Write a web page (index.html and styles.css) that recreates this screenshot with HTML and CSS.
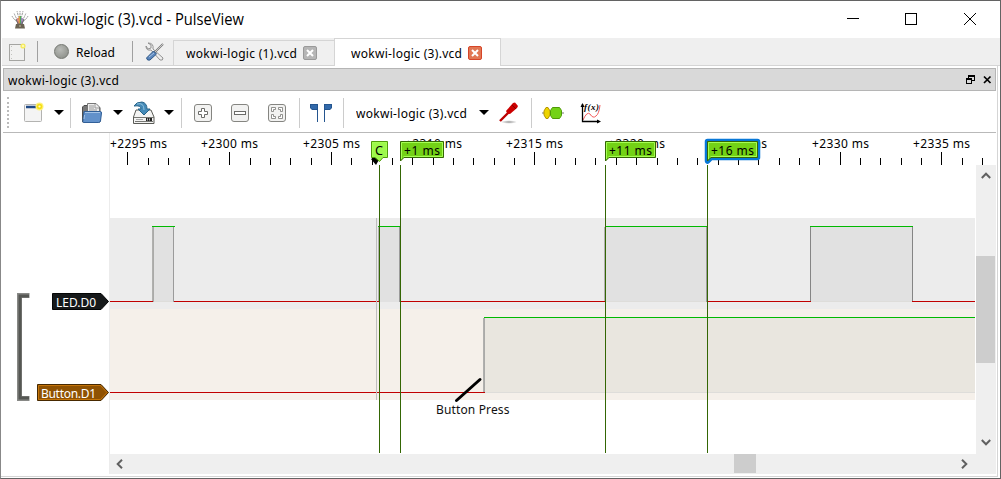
FILE: index.html
```html
<!DOCTYPE html>
<html lang="en">
<head>
<meta charset="utf-8">
<title>wokwi-logic (3).vcd - PulseView</title>
<link rel="stylesheet" href="styles.css">
</head>
<body>
<div class="window">
  <header class="titlebar">
    <svg class="app-icon" width="20" height="20" viewBox="0 0 20 20">
      <g fill="none" stroke="#999" stroke-width="1"><path d="M9 13Q4 10 2 6M9 13Q5 6 4 3M10 13Q8 5 7 1M10 13V1M10 13Q12 5 13 1M11 13Q15 6 16 3M11 13Q16 10 18 6" stroke-dasharray="2 .7"/></g>
      <path d="M8 14V8" stroke="#e45b54" stroke-width="1.3"/><path d="M9.4 14V6" stroke="#d6a23f" stroke-width="1.3"/><path d="M10.6 14V6" stroke="#50a760" stroke-width="1.3"/><path d="M12 14V8" stroke="#8a63b4" stroke-width="1.3"/>
      <path d="M6 9L8 14H12L14 9" fill="none" stroke="#666"/><path d="M6 14H14L15 18.500H5Z" fill="#6b6353"/><path d="M9 16H11" stroke="#c8c0ac"/>
    </svg>
    <h1 class="title"><svg width="210" height="24"><text x="0" y="17" textLength="209" lengthAdjust="spacingAndGlyphs">wokwi-logic (3).vcd - PulseView</text></svg></h1>
    <svg class="window-buttons" width="130" height="14" viewBox="0 0 130 14" shape-rendering="crispEdges" fill="none" stroke="#000">
      <path d="M0 6.500H12"/><rect x="58.500" y="1.500" width="11" height="11"/><path d="M117 1L129 13M129 1L117 13" shape-rendering="auto"/>
    </svg>
  </header>

  <nav class="session-bar">
    <svg class="new-session" width="18" height="20" viewBox="0 0 18 20">
      <rect x="1.500" y="2.500" width="15" height="16" fill="#f1f1f0" stroke="#a5a5a2"/><path d="M3.500 4V17" stroke="#c2c2be" stroke-dasharray="1 3"/><circle cx="15" cy="4" r="2.600" fill="#f6ec62"/><circle cx="15" cy="4" r="1" fill="#fffbd0"/>
    </svg>
    <i class="divider"></i>
    <button class="reload"><i class="run-dot"></i><svg width="42" height="20"><text x="0" y="15" textLength="39">Reload</text></svg></button>
    <i class="divider divider-tools"></i>
    <svg class="tools" width="20" height="20" viewBox="0 0 20 20">
      <path d="M3 1L6 3V6L3 7L1 4Q1 9 6 8L15 18Q18 19 18 16L8 7Q9 1 3 1Z" fill="#eee" stroke="#888" stroke-width=".9"/>
      <path d="M18 2L9 11" stroke="#777" stroke-width="2"/><path d="M18 2L10 10" stroke="#ddd" stroke-width=".8"/>
      <path d="M8.500 9L11.500 12L5 18Q2 19 1.500 16Z" fill="#5b86bd" stroke="#315987"/><path d="M4 15L9 11" stroke="#a6c2e2"/>
    </svg>
    <div class="tabs">
      <div class="tab"><svg width="114" height="20"><text x="0" y="15" textLength="111">wokwi-logic (1).vcd</text></svg>
        <svg width="14" height="14" viewBox="0 0 14 14"><rect x=".5" y=".5" width="13" height="13" rx="1.500" fill="#b6b6b6" stroke="#9a9a9a"/><path d="M4 4L10 10M10 4L4 10" stroke="#fff" stroke-width="2"/></svg></div>
      <div class="tab tab-active"><svg width="114" height="20"><text x="0" y="15" textLength="111">wokwi-logic (3).vcd</text></svg>
        <svg width="14" height="14" viewBox="0 0 14 14"><rect x=".5" y=".5" width="13" height="13" rx="1.500" fill="#e17754" stroke="#d64528"/><path d="M4 4L10 10M10 4L4 10" stroke="#fff" stroke-width="2"/></svg></div>
    </div>
  </nav>

  <main class="session">
    <div class="dock-title">
      <svg width="120" height="20"><text x="0" y="15" textLength="111">wokwi-logic (3).vcd</text></svg>
      <svg class="dock-buttons" width="26" height="10" viewBox="0 0 26 10" shape-rendering="crispEdges"><path d="M2 0H9V6H6V5H8V2H3V3H2ZM0 3H6V9H0ZM1 5V8H5V5Z" fill-rule="evenodd"/><path d="M18 1.500L24.500 8M24.500 1.500L18 8" stroke="#000" stroke-width="1.700" shape-rendering="auto"/></svg>
    </div>

    <div class="toolbar">
      <i class="grip"></i>
      <svg class="doc-icon" width="22" height="22" viewBox="0 0 22 22"><rect x="1.500" y="2.500" width="17" height="17" rx="1" fill="#f4f4f4" stroke="#b3b3b1"/><path d="M3 5H15" stroke="#204a87" stroke-width="2.500"/><circle cx="16.500" cy="4.500" r="4" fill="#fff27b"/><circle cx="16.500" cy="4.500" r="2.800" fill="#f5df16"/><circle cx="16.500" cy="4.500" r="1.100" fill="#fffbd0"/></svg>
      <i class="arrow"></i><i class="rule rule-a"></i>
      <svg class="open-icon" width="22" height="22" viewBox="0 0 22 22"><path d="M1.500 20V5L3 3.500H8L10 5.500H19V20Z" fill="#777" stroke="#4e4e4e"/><path d="M6.500 13V1.500H15L18.500 5V13Z" fill="#eee" stroke="#777"/><path d="M14 2V6H18M8 4H13M8 6H13M8 8H16" fill="none" stroke="#999"/><path d="M3 9.500H19.500Q20.500 9.500 20.500 11L19.500 19Q19 20.500 17.500 20.500H2.500Q1.500 20 2 18Z" fill="#6291ca" stroke="#305f98"/><path d="M4 10.500H19M3.500 13L3 17" stroke="#a4c4e7"/></svg>
      <i class="arrow"></i>
      <svg class="save-icon" width="24" height="24" viewBox="0 0 24 24"><path d="M4 9H19L22 16V22.500H1.500V16Z" fill="#f4f4f3" stroke="#5a5b56"/><path d="M2 16.500H22M3 20.500H21" stroke="#767773"/><path d="M4 18.500H11" stroke="#aaa"/><path d="M14 18.500H20" stroke="#222" stroke-width="3"/><path d="M15 18.500H19" stroke="#bbb" stroke-dasharray="1 1" stroke-width="2"/><path d="M2 5Q4 1 10 1Q15 2 15 8H18L12 14L6 8H9Q9 4 2 5Z" fill="#448ab8" stroke="#286489"/><path d="M5 3Q12 1 12 9" fill="none" stroke="#8fc2de"/></svg>
      <i class="arrow"></i><i class="rule rule-b"></i>
      <svg class="zoom-icons" width="94" height="18" viewBox="0 0 94 18"><g fill="#f2f2f1" stroke="#858581"><rect x=".5" y=".5" width="17" height="17" rx="2.500"/><rect x="37.500" y=".5" width="17" height="17" rx="2.500"/><rect x="74.500" y=".5" width="17" height="17" rx="2.500"/></g><g fill="#fff" stroke="#6b6b68"><path d="M7.500 4.500H10.500V7.500H13.500V10.500H10.500V13.500H7.500V10.500H4.500V7.500H7.500Z"/><rect x="40.500" y="7.500" width="11" height="3"/></g><path d="M77.500 7.500V3.500H81.500V5.500H79.500V7.500ZM84.500 3.500H88.500V7.500H86.500V5.500H84.500ZM77.500 10.500H79.500V12.500H81.500V14.500H77.500ZM88.500 10.500V14.500H84.500V12.500H86.500V10.500Z" fill="#fff" stroke="#777773" stroke-width=".8"/></svg>
      <i class="rule rule-c"></i>
      <svg class="cursor-icon" width="22" height="18" viewBox="0 0 22 18"><path d="M0 0H8V18H7V6H2L0 4ZM14 0H22V4L20 6H15V18H14Z" fill="#24558f"/><path d="M1 1H7V5H2L1 4ZM15 1H21V4L20 5H15Z" fill="#3269aa"/></svg>
      <i class="rule rule-d"></i>
      <svg class="device" width="114" height="20"><text x="0" y="15" textLength="111">wokwi-logic (3).vcd</text></svg>
      <i class="arrow"></i>
      <svg class="probe-icon" width="22" height="22" viewBox="0 0 22 22"><defs><radialGradient id="sh"><stop stop-color="#999"/><stop offset="1" stop-color="#999" stop-opacity="0"/></radialGradient></defs><ellipse cx="11" cy="20" rx="8" ry="1.800" fill="url(#sh)"/><path d="M2 19L11 10" stroke="#b00" stroke-width="2.400"/><path d="M8 9L15 1L17 .5L20 4L19 6L12 12Q9 12 8 9Z" fill="#c00"/><path d="M14 3L18 7" stroke="#850000"/></svg>
      <i class="rule rule-e"></i>
      <svg class="decoder-icon" width="22" height="14" viewBox="0 0 22 14"><path d="M0 7H22" stroke="#777"/><path d="M4 1.500H6L8 5V9L6 12.500H4L2 9V5Z" fill="#edd400" stroke="#b59500"/><path d="M10.500 1.500H17.500L19.500 4.500V9.500L17.500 12.500H10.500L8.500 9.500V4.500Z" fill="#73d216" stroke="#4e9a06"/></svg>
      <svg class="math-icon" width="22" height="22" viewBox="0 0 22 22"><path d="M3 18Q7 9 10 12Q13 17 16 14Q19 12 20 3" fill="none" stroke="#f45d5d"/><path d="M2.500 2V19.500H19" fill="none" stroke="#000" stroke-width="1.300"/><path d="M.5 5L2.500 1L4.500 5ZM17 17.500L21 19.500L17 21.500Z"/><text class="math-label" x="4" y="8" textLength="15">f(x)</text></svg>
    </div>

    <div class="trace-view">
      <svg class="traces" width="973" height="321" viewBox="3 133 973 321">
        <g shape-rendering="crispEdges">
          <path d="M109.500 133V474" stroke="#ececec"/>
          <rect x="110" y="218" width="865" height="91" fill="#ececec"/>
          <rect x="110" y="309" width="865" height="91" fill="#f5f0ea"/>
          <g fill="#e1e1e1"><rect x="153" y="227" width="21" height="75"/><rect x="379" y="227" width="21" height="75"/><rect x="604" y="227" width="103" height="75"/><rect x="811" y="227" width="101" height="75"/></g>
          <rect x="484" y="318" width="491" height="75" fill="#e9e6df"/>
          <path d="M485 392.500H975M153 301.500H174M605 301.500H707M811 301.500H912" stroke="#deddda"/>
          <path d="M152.500 227V302M378.500 227V302M604.500 227V302M483.500 318V393" stroke="#b0b0ae"/>
          <path d="M153.500 227V302M484.500 318V393" stroke="#aaaaa8"/>
          <path d="M173.500 227V302M399.500 227V302M706.500 227V302" stroke="#9b9b9b"/>
          <path d="M810.500 227V302M912.500 227V302" stroke="#858585"/>
          <path d="M152 226.500H175M378 226.500H401M605 226.500H707M810 226.500H913M484 317.500H975" stroke="#00b900"/>
          <path d="M110 301.500H153M174 301.500H379M400 301.500H605M707 301.500H811M912 301.500H975M110 392.500H485" stroke="#c00000"/>
          <path d="M376.500 218V400" stroke="#bfbfbf"/>
          <path d="M127.500 152V165M229.500 152V165M331.500 152V165M433.500 152V165M534.500 152V165M636.500 152V165M738.500 152V165M840.500 152V165M941.500 152V165M148.500 158V165M168.500 158V165M189.500 158V165M209.500 158V165M250.500 158V165M270.500 158V165M290.500 158V165M311.500 158V165M351.500 158V165M372.500 158V165M392.500 158V165M412.500 158V165M453.500 158V165M473.500 158V165M494.500 158V165M514.500 158V165M555.500 158V165M575.500 158V165M595.500 158V165M616.500 158V165M657.500 158V165M677.500 158V165M697.500 158V165M718.500 158V165M758.500 158V165M779.500 158V165M799.500 158V165M819.500 158V165M860.500 158V165M880.500 158V165M901.500 158V165M921.500 158V165M962.500 158V165M982.500 158V165" stroke="#000"/>
          <path d="M379.500 165V453M400.500 165V453M605.500 165V453M707.500 165V453" stroke="#346604"/>
        </g>
        <g>
          <text x="110" y="148" textLength="57">+2295 ms</text><text x="201" y="148" textLength="57">+2300 ms</text><text x="303" y="148" textLength="57">+2305 ms</text><text x="405" y="148" textLength="57">+2310 ms</text><text x="506" y="148" textLength="57">+2315 ms</text><text x="608" y="148" textLength="57">+2320 ms</text><text x="710" y="148" textLength="57">+2325 ms</text><text x="812" y="148" textLength="57">+2330 ms</text><text x="913" y="148" textLength="57">+2335 ms</text>
        </g>
        <path d="M371 159L373 158H380L376 165Z"/>
        <path d="M371.500 141.500H387.500V157.500H383L379.500 161.500L375 157.500H371.500Z" fill="#9df84b" stroke="#4f9b0b"/>
        <text x="375" y="155" textLength="8" lengthAdjust="spacingAndGlyphs">C</text>
        <path d="M707.500 141.500H757.500V157.500H711L707.500 161Z" fill="none" stroke="#0878d8" stroke-width="5.500" stroke-linejoin="round"/>
        <g fill="#73d216" stroke="#346604"><path d="M400.500 141.500H443.500V157.500H404L400.500 161Z"/><path d="M605.500 141.500H655.500V157.500H609L605.500 161Z"/><path d="M707.500 141.500H757.500V157.500H711L707.500 161Z"/></g>
        <path d="M401.500 159V142.500H442.500V156.500H403.500M606.500 159V142.500H654.500V156.500H608.500M708.500 159V142.500H756.500V156.500H710.500M372.500 156.500V142.500H386.500V156.500" fill="none" stroke="#a5ff53"/>
        <text x="404" y="155" textLength="36">+1 ms</text><text x="609" y="155" textLength="43">+11 ms</text><text x="711" y="155" textLength="43">+16 ms</text>
        <path d="M29.500 295.500H19.500V398.500H29.500" fill="none" stroke="#888986" stroke-width="5"/><path d="M29 296H20V398H29" fill="none" stroke="#555753" stroke-width="3"/>
        <path d="M52.500 293.500H101L108.500 301.500L101 309.500H52.500Z" fill="#16191a" stroke="#050606"/>
        <path d="M37.500 384.500H101L108.500 392.500L101 400.500H37.500Z" fill="#8f5202" stroke="#472900"/><path d="M38.500 399V385.500H100.500L107 392.500L100.500 399.500H38.500Z" fill="none" stroke="#c57409"/>
        <g class="channel"><text x="56" y="307" textLength="40">LED.D0</text><text x="41" y="398" textLength="55">Button.D1</text></g>
        <path d="M456.500 400.500L480 379.500" stroke="#000" stroke-width="3" stroke-linecap="round"/>
        <text class="note" x="436" y="414" textLength="73.500">Button Press</text>
      </svg>
      <div class="vscroll">
        <svg width="10" height="7" viewBox="0 0 10 7"><path d="M.8 6L5 1.700L9.200 6" fill="none" stroke="#606060" stroke-width="2"/></svg>
        <i class="vthumb"></i>
        <svg width="10" height="7" viewBox="0 0 10 7"><path d="M.8 1L5 5.300L9.200 1" fill="none" stroke="#606060" stroke-width="2"/></svg>
      </div>
      <div class="hscroll">
        <svg width="7" height="10" viewBox="0 0 7 10"><path d="M6 .8L1.700 5L6 9.200" fill="none" stroke="#606060" stroke-width="2"/></svg>
        <i class="hthumb"></i>
        <svg width="7" height="10" viewBox="0 0 7 10"><path d="M1 .8L5.300 5L1 9.200" fill="none" stroke="#606060" stroke-width="2"/></svg>
      </div>
    </div>
  </main>
</div>
</body>
</html>
```
FILE: styles.css
```css
* { box-sizing: border-box; }
body { margin: 0; overflow: hidden; background: #fff; color: #000; font: 12px "Noto Sans", "Open Sans", sans-serif; }
svg { display: block; flex: none; }
i { flex: none; }
.window { width: 1001px; height: 479px; border: 1px solid #636363; border-left-color: #888; background: #fff; }
.titlebar { height: 37px; display: flex; align-items: center; padding: 0 23px 0 9px; }
.title { margin: 0 auto 0 5px; font: 400 15.5px "Open Sans", "Noto Sans", sans-serif; }
.window-buttons { position: relative; top: -1px; }
.session-bar { height: 28px; display: flex; align-items: center; background: #efefef; border-bottom: 1px solid #d5d5d5; padding-left: 6px; margin-left: 1px; }
.divider { width: 1px; height: 21px; background: #a0a0a0; margin-left: 11px; }
.divider-tools { margin-left: 14px; }
.reload { display: flex; align-items: center; gap: 7px; padding: 0; margin-left: 16px; border: 0; background: none; font: inherit; }
.run-dot { width: 15px; height: 15px; border: 1px solid #737670; border-radius: 50%; background: radial-gradient(circle at 40% 35%, #b9bbb7, #858882); }
.tools { margin-left: 12px; }
.tabs { display: flex; align-items: flex-end; height: 28px; margin-left: 8px; align-self: flex-start; }
.tab { display: flex; align-items: center; gap: 3px; width: 161px; height: 26px; padding-left: 12px; border: 1px solid #d5d5d5; border-right: 0; background: #f0f0f0; }
.tab-active { width: 167px; height: 28px; padding-left: 16px; border-right: 1px solid #d5d5d5; border-bottom: 0; background: #fff; }
.session { height: 411px; padding: 2px 0 0 2px; margin-right: 2px; border-right: 1px solid #d5d5d5; border-bottom: 1px solid #d5d5d5; }
.dock-title { height: 23px; width: 993px; display: flex; align-items: center; justify-content: space-between; padding: 0 3px 0 4px; background: #d9d9d9; border: 1px solid #b5b5b5; }
.toolbar { height: 42px; width: 993px; display: flex; align-items: center; padding-top: 2px; border-bottom: 1px solid #b9b9b9; }
.grip { height: 31px; margin-left: 4px; border-left: 2px dotted #bbb; }
.arrow { border: 5px solid transparent; border-top-color: #000; border-bottom: 0; }
.rule { width: 1px; height: 30px; background: #ccc; }
.doc-icon { margin-left: 14px; margin-right: 9px; }
.rule-a { margin-left: 6px; }
.open-icon { margin: 0 10px 0 10px; }
.save-icon { margin: 0 8px 0 9px; }
.rule-b { margin-left: 7px; }
.zoom-icons { margin-left: 12px; }
.rule-c { margin-left: 11px; }
.cursor-icon { margin-left: 10px; }
.rule-d { margin-left: 11px; }
.device { margin-left: 12px; margin-right: 9px; }
.probe-icon { margin-left: 9px; }
.rule-e { margin-left: 11px; }
.decoder-icon { margin-left: 10px; }
.math-icon { margin-left: 16px; }
.math-label { font: italic bold 9px "Liberation Serif", serif; }
.trace-view { display: grid; grid-template-columns: 973px 20px; grid-template-rows: 321px 20px; width: 993px; }
.traces { overflow: visible; }
.vscroll { grid-row: 1 / 3; grid-column: 2; margin-top: 32px; height: 309px; padding: 7px 0 28px; display: flex; flex-direction: column; align-items: center; background: #efefef; }
.vthumb { width: 19px; height: 107px; margin: 77px 1px auto 0; background: #cdcdcd; }
.hscroll { grid-row: 2; grid-column: 1; margin-left: 107px; display: flex; align-items: center; padding: 0 8px 0 6px; background: #efefef; }
.hthumb { width: 22px; height: 19px; margin: 0 auto 1px 611px; background: #cdcdcd; }
.channel { fill: #fff; }
.note { fill: #111; }
```
